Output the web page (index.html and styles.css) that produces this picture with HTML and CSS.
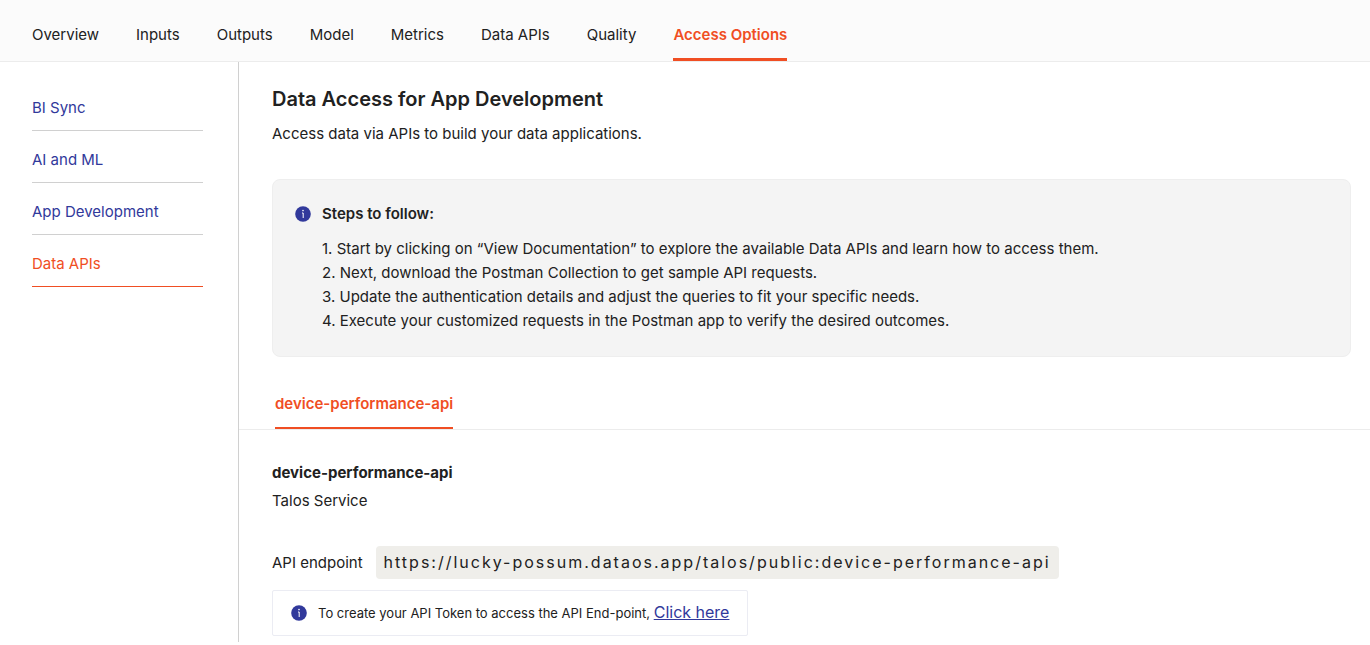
FILE: index.html
```html
<!DOCTYPE html>
<html lang="en">
<head>
<meta charset="utf-8">
<title>Access Options</title>
<link rel="stylesheet" href="styles.css">
</head>
<body>
<nav class="tabs" aria-label="Sections">
  <a class="tab" href="#overview">Overview</a>
  <a class="tab" href="#inputs">Inputs</a>
  <a class="tab" href="#outputs">Outputs</a>
  <a class="tab" href="#model">Model</a>
  <a class="tab" href="#metrics">Metrics</a>
  <a class="tab" href="#data-apis">Data APIs</a>
  <a class="tab" href="#quality">Quality</a>
  <a class="tab tab-active" href="#access" aria-current="page">Access Options</a>
</nav>
<div class="layout">
  <nav class="sidebar" aria-label="Access options">
    <a class="side-link" href="#bi">BI Sync</a>
    <a class="side-link" href="#ai">AI and ML</a>
    <a class="side-link" href="#app">App Development</a>
    <a class="side-link side-active" href="#apis" aria-current="page">Data APIs</a>
  </nav>
  <main class="main">
    <header class="intro">
      <h1 class="title">Data Access for App Development</h1>
      <p class="subtitle">Access data via APIs to build your data applications.</p>
    </header>
    <section class="steps">
      <svg class="info" viewBox="0 0 16 16" aria-hidden="true"><circle cx="8" cy="8" r="7.8" fill="#31399b"/><circle cx="8" cy="4.6" r="0.8" fill="#fff"/><path d="M7 7h1.2v5" fill="none" stroke="#fff" stroke-width="1"/></svg>
      <div class="steps-body">
        <h2 class="steps-title">Steps to follow:</h2>
        <ol class="steps-list">
          <li>Start by clicking on “View Documentation” to explore the available Data APIs and learn how to access them.</li>
          <li>Next, download the Postman Collection to get sample API requests.</li>
          <li>Update the authentication details and adjust the queries to fit your specific needs.</li>
          <li>Execute your customized requests in the Postman app to verify the desired outcomes.</li>
        </ol>
      </div>
    </section>
    <div class="api-tabs">
      <button class="api-tab" type="button">device-performance-api</button>
    </div>
    <section class="api">
      <h2 class="api-name">device-performance-api</h2>
      <p class="api-kind">Talos Service</p>
      <div class="endpoint">
        <span>API endpoint</span>
        <code class="url">https://lucky-possum.dataos.app/talos/public:device-performance-api</code>
      </div>
      <div class="note">
        <svg class="info" viewBox="0 0 16 16" aria-hidden="true"><circle cx="8" cy="8" r="7.8" fill="#31399b"/><circle cx="8" cy="4.6" r="0.8" fill="#fff"/><path d="M7 7h1.2v5" fill="none" stroke="#fff" stroke-width="1"/></svg>
        <p class="note-text">To create your API Token to access the API End-point, <a class="note-link" href="#token">Click here</a></p>
      </div>
    </section>
  </main>
</div>
</body>
</html>
```
FILE: styles.css
```css
* { box-sizing: border-box; }
body {
  margin: 0;
  background: #fff;
  color: #212121;
  font: 15px/24px Inter, "Liberation Sans", sans-serif;
}
h1, h2, p, ol { margin: 0; padding: 0; }
a { color: inherit; text-decoration: none; }

.tabs {
  display: flex;
  gap: 37px;
  padding: 23px 32px 0;
  background: #fbfbfb;
  border-bottom: 1px solid #ececec;
}
.tab { padding-bottom: 11px; border-bottom: 3px solid transparent; }
.tab-active { color: #f04e23; border-color: #f04e23; font-weight: 600; }

.layout { display: flex; margin-bottom: 3px; }
.sidebar {
  flex: none;
  width: 239px;
  padding: 17px 35px 0 32px;
  border-right: 1px solid #d0d0d0;
}
.side-link {
  display: block;
  padding: 17px 0 10px;
  border-bottom: 1px solid #d0d0d0;
  color: #31399b;
}
.side-active { color: #f04e23; border-color: #f04e23; }

.main { flex: 1; min-width: 0; padding-bottom: 6px; }
.intro { padding: 24px 33px 33px; }
.title { font-size: 20px; line-height: 26px; font-weight: 600; }
.subtitle { margin-top: 10px; }

.steps {
  display: flex;
  gap: 11px;
  margin: 0 19px 0 33px;
  padding: 22px 22px 23px;
  background: #f4f4f4;
  border: 1px solid #eee;
  border-radius: 8px;
}
.info { flex: none; width: 16px; height: 16px; margin-top: 4px; }
.steps-title { font-size: 15px; font-weight: 600; }
.steps-list { margin-top: 11px; list-style-position: inside; }
.steps-list li::marker { font-variant-numeric: normal; }

.api-tabs { display: flex; padding: 35px 36px 0; border-bottom: 1px solid #ececec; }
.api-tab {
  padding: 0 0 11px;
  border: 0;
  border-bottom: 2px solid #f04e23;
  background: none;
  color: #f04e23;
  font: inherit;
  font-weight: 600;
}
.api { padding: 31px 33px 0; }
.api-name { font-size: 15px; font-weight: 700; }
.api-kind { margin-top: 4px; }
.endpoint { display: flex; align-items: center; gap: 13px; margin-top: 33px; }
.url {
  padding: 4px 8px 5px;
  border-radius: 4px;
  background: #efeeea;
  font: inherit;
  font-size: 16px;
  letter-spacing: 2px;
}
.note {
  display: flex;
  gap: 11px;
  width: fit-content;
  margin-top: 11px;
  padding: 10px 18px;
  border: 1px solid #ebecf3;
  border-radius: 2px;
}
.note-text { font-size: 13px; }
.note-link { color: #31399b; font-size: 16px; line-height: 20px; text-decoration: underline; }
```
